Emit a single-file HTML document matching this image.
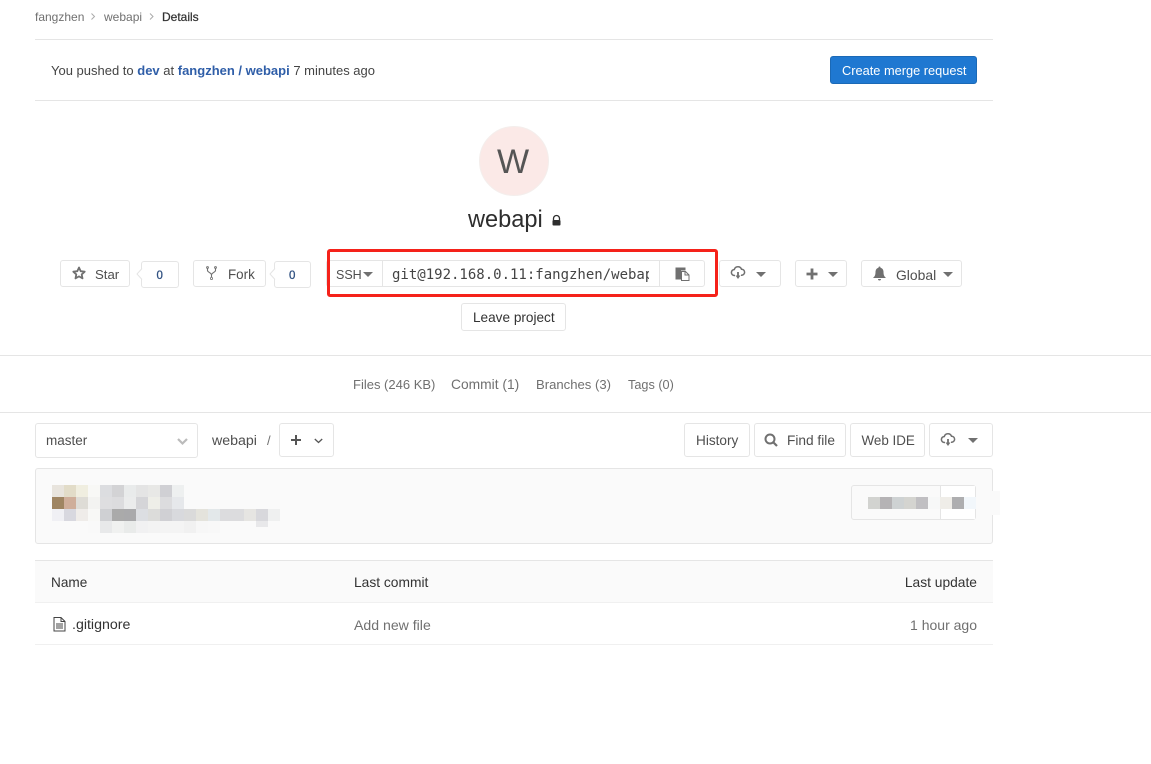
<!DOCTYPE html>
<html><head><meta charset="utf-8"><style>
html,body{margin:0;padding:0;background:#fff}
body{width:1151px;height:764px;position:relative;overflow:hidden;font-family:"Liberation Sans",sans-serif;font-size:13.4px;color:#2e2e2e}
.t{position:absolute;white-space:nowrap;line-height:20px;height:20px}
.b{position:absolute;box-sizing:border-box;border:1px solid #e5e5e5;border-radius:3px;background:#fff}
.l{position:absolute;height:1px;background:#e5e5e5}
svg{position:absolute;overflow:visible}
.g{color:#707070}.d{color:#4f4f4f}
</style></head><body>
<div class="t g" style="left:35px;top:7px;font-size:12px">fangzhen</div>
<div class="t g" style="left:104px;top:7px;font-size:12px">webapi</div>
<div class="t" style="left:162px;top:7px;font-size:12px;color:#333;-webkit-text-stroke:.25px #333">Details</div>
<svg style="left:0;top:0" width="200" height="30"><path d="M91.500 13.500l3 3-3 3M150 13.500l3 3-3 3" fill="none" stroke="#aaa" stroke-width="1"/></svg>
<div class="l" style="left:35px;top:39px;width:958px"></div>
<div class="l" style="left:35px;top:100px;width:958px"></div>
<div class="t" style="left:51px;top:61px;font-size:13px;color:#444">You pushed to <b style="color:#2f5ea8">dev</b> at <b style="color:#2f5ea8">fangzhen / webapi</b> 7 minutes ago</div>
<div class="b" style="left:830px;top:56px;width:147px;height:28px;background:#1f78d1;border-color:#1b69b6"></div>
<div class="t" style="left:842px;top:61px;color:#fff;font-size:12.800px">Create merge request</div>

<div style="position:absolute;left:479px;top:126px;width:70px;height:70px;border-radius:50%;background:#fbe9e7;box-sizing:border-box;border:1px solid #f4eeec"></div>
<div class="t" style="left:497px;top:146px;font-size:34px;line-height:32px;height:32px;color:#555">W</div>
<div class="t" style="left:468px;top:207px;font-size:23.600px;line-height:26px;height:26px;color:#2e2e2e">webapi</div>
<svg style="left:551.500px;top:215px" width="10" height="12"><path d="M1.500 5V3.500a3 3 0 0 1 6 0V5" fill="none" stroke="#2e2e2e" stroke-width="1.300"/><rect x=".5" y="5" width="8" height="5.500" rx="1" fill="#2e2e2e"/></svg>

<div class="b" style="left:60px;top:260px;width:70px;height:27px"></div>
<svg style="left:72px;top:266px" width="14" height="14"><path d="M7 1.500l1.700 3.700 4 .5-3 2.700.8 4L7 10.400l-3.500 2 .8-4-3-2.700 4-.5z" fill="none" stroke="#707070" stroke-width="1.800" stroke-linejoin="round"/></svg>
<div class="t d" style="left:95px;top:265px;font-size:13.200px">Star</div>
<div class="b" style="left:141px;top:261px;width:38px;height:27px"></div>
<svg style="left:136px;top:268px" width="6" height="12"><path d="M6 0.500L1 6l5 5.500" fill="#fff" stroke="#e5e5e5"/></svg>
<div class="t" style="left:156.500px;top:266px;font-size:11.500px;color:#2f5080;-webkit-text-stroke:.3px #2f5080">0</div>

<div class="b" style="left:193px;top:260px;width:73px;height:27px"></div>
<svg style="left:206px;top:266px" width="12" height="15"><path d="M1.500 1.500v3c0 1.800 4 2.200 4 4.500v2.500M9.500 1.500v3c0 1.800-4 2.200-4 4.500" fill="none" stroke="#707070" stroke-width="1.100"/><circle cx="1.500" cy="1.500" r="1" fill="none" stroke="#707070" stroke-width=".8"/><circle cx="9.500" cy="1.500" r="1" fill="none" stroke="#707070" stroke-width=".8"/><circle cx="5.500" cy="12.500" r="1.100" fill="none" stroke="#707070" stroke-width=".8"/></svg>
<div class="t d" style="left:228px;top:265px;font-size:13.400px">Fork</div>
<div class="b" style="left:274px;top:261px;width:37px;height:27px"></div>
<svg style="left:269px;top:268px" width="6" height="12"><path d="M6 0.500L1 6l5 5.500" fill="#fff" stroke="#e5e5e5"/></svg>
<div class="t" style="left:289px;top:266px;font-size:11.500px;color:#2f5080;-webkit-text-stroke:.3px #2f5080">0</div>

<div class="b" style="left:326px;top:260px;width:379px;height:27px"></div>
<div class="l" style="left:382px;top:260px;width:1px;height:27px"></div>
<div class="l" style="left:659px;top:260px;width:1px;height:27px"></div>
<div class="t d" style="left:336px;top:265px;font-size:12.500px">SSH</div>
<svg style="left:363px;top:272px" width="10" height="6"><path d="M0 0h10L5 5z" fill="#707070"/></svg>
<div class="t" style="left:392px;top:265px;width:257px;overflow:hidden;font-family:'DejaVu Sans Mono',monospace;font-size:14px;color:#444">git@192.168.0.11:fangzhen/webapi.git</div>
<svg style="left:675px;top:267px" width="16" height="16"><path d="M0.500 .5h10v3H6v9H.5z" fill="#707070"/><path d="M6.500 4.500h4l3.500 3.500v5.500H6.500z" fill="#fff" stroke="#707070"/><path d="M10 4.500V8h4" fill="none" stroke="#707070"/></svg>
<div style="position:absolute;left:327px;top:249px;width:385px;height:42px;border:3px solid #f5221a;border-radius:3px"></div>
<div class="b" style="left:719px;top:260px;width:62px;height:27px"></div>
<svg style="left:731px;top:266px" width="14" height="14"><path d="M4 9.500H3.500a3 3 0 0 1-.2-6 3.800 3.800 0 0 1 7.200-.3 3 3 0 0 1 .2 6H10" fill="none" stroke="#707070" stroke-width="1.500"/><path d="M7 6v4.500" stroke="#707070" stroke-width="1.800"/><path d="M4.500 9.500h5L7 13z" fill="#707070"/></svg>
<svg style="left:756px;top:272px" width="10" height="6"><path d="M0 0h10L5 5z" fill="#707070"/></svg>
<div class="b" style="left:795px;top:260px;width:52px;height:27px"></div>
<svg style="left:805.500px;top:267.500px" width="13" height="13"><path d="M6 .500v11M.500 6h11" stroke="#707070" stroke-width="2.800"/></svg>
<svg style="left:828px;top:272px" width="10" height="6"><path d="M0 0h10L5 5z" fill="#707070"/></svg>
<div class="b" style="left:861px;top:260px;width:101px;height:27px"></div>
<svg style="left:872px;top:266px" width="15" height="15"><path d="M7.500 .5c.8 0 1 .7 1 1.200 2 .5 3 2.200 3 4.300 0 3 .8 4.500 2.500 6H1c1.700-1.500 2.500-3 2.500-6 0-2.100 1-3.800 3-4.300 0-.5.200-1.200 1-1.200zM6 13h3a1.500 1.500 0 0 1-3 0z" fill="#707070"/></svg>
<div class="t d" style="left:896px;top:265px;font-size:13.900px">Global</div>
<svg style="left:943px;top:272px" width="10" height="6"><path d="M0 0h10L5 5z" fill="#707070"/></svg>
<div class="b" style="left:461px;top:303px;width:105px;height:28px"></div>
<div class="t" style="left:473px;top:308px;font-size:13.600px;color:#333">Leave project</div>

<div class="l" style="left:0;top:355px;width:1151px"></div>
<div class="l" style="left:0;top:412px;width:1151px"></div>
<div class="t g" style="left:353px;top:375px;font-size:13px">Files (246 KB)</div>
<div class="t g" style="left:451px;top:375px;font-size:13.800px">Commit (1)</div>
<div class="t g" style="left:536px;top:375px;font-size:13.100px">Branches (3)</div>
<div class="t g" style="left:628px;top:375px;font-size:12.700px">Tags (0)</div>

<div class="b" style="left:35px;top:423px;width:163px;height:35px"></div>
<div class="t d" style="left:46px;top:431px;font-size:13.500px">master</div>
<svg style="left:177px;top:437.500px" width="12" height="8"><path d="M1 1l4.500 4.500L10 1" fill="none" stroke="#bbb" stroke-width="2.200"/></svg>
<div class="t d" style="left:212px;top:431px;font-size:14.200px">webapi</div>
<div class="t g" style="left:267px;top:431px;font-size:13px">/</div>
<div class="b" style="left:279px;top:423px;width:55px;height:34px"></div>
<svg style="left:291px;top:435px" width="11" height="11"><path d="M5 0v10M0 5h10" stroke="#555" stroke-width="2"/></svg>
<svg style="left:313.500px;top:438px" width="10" height="7"><path d="M.8 1l3.700 3.500L8.200 1" fill="none" stroke="#555" stroke-width="1.300"/></svg>

<div class="b" style="left:684px;top:423px;width:66px;height:34px"></div>
<div class="t d" style="left:696px;top:431px;font-size:13.600px">History</div>
<div class="b" style="left:754px;top:423px;width:92px;height:34px"></div>
<svg style="left:764px;top:433px" width="15" height="15"><circle cx="6" cy="6" r="4.500" fill="none" stroke="#707070" stroke-width="2"/><path d="M9.500 9.500l3.500 3.500" stroke="#707070" stroke-width="2.200"/></svg>
<div class="t d" style="left:787px;top:431px;font-size:13.700px">Find file</div>
<div class="b" style="left:850px;top:423px;width:75px;height:34px"></div>
<div class="t d" style="left:861.500px;top:431px;font-size:13.400px">Web IDE</div>
<div class="b" style="left:929px;top:423px;width:64px;height:34px"></div>
<svg style="left:941px;top:433px" width="14" height="14"><path d="M4 9.500H3.500a3 3 0 0 1-.2-6 3.800 3.800 0 0 1 7.200-.3 3 3 0 0 1 .2 6H10" fill="none" stroke="#707070" stroke-width="1.500"/><path d="M7 6v4.500" stroke="#707070" stroke-width="1.800"/><path d="M4.500 9.500h5L7 13z" fill="#707070"/></svg>
<svg style="left:968px;top:438px" width="10" height="6"><path d="M0 0h10L5 5z" fill="#707070"/></svg>

<div class="b" style="left:35px;top:468px;width:958px;height:76px;background:#fafafa"></div>
<div class="b" style="left:851px;top:485px;width:125px;height:35px;background:#fafafa"></div>
<div style="position:absolute;left:941px;top:486px;width:34px;height:33px;background:#fff"></div>
<div class="l" style="left:940px;top:485px;width:1px;height:35px"></div>
<svg style="left:0;top:0" width="1151" height="764" shape-rendering="crispEdges">
<g>
<rect x="52" y="485" width="12" height="12" fill="#e8e4dd"/><rect x="64" y="485" width="12" height="12" fill="#e2dcc8"/><rect x="76" y="485" width="12" height="12" fill="#f0eee0"/><rect x="88" y="485" width="12" height="12" fill="#f8f8f6"/><rect x="100" y="485" width="12" height="12" fill="#dcdde0"/><rect x="112" y="485" width="12" height="12" fill="#d3d3d5"/><rect x="124" y="485" width="12" height="12" fill="#e9ebeb"/><rect x="136" y="485" width="12" height="12" fill="#e4e4e4"/><rect x="148" y="485" width="12" height="12" fill="#e8e8e6"/><rect x="160" y="485" width="12" height="12" fill="#d0d0d4"/><rect x="172" y="485" width="12" height="12" fill="#eef0f0"/>
<rect x="52" y="497" width="12" height="12" fill="#9f8562"/><rect x="64" y="497" width="12" height="12" fill="#cfae9a"/><rect x="76" y="497" width="12" height="12" fill="#dedcd6"/><rect x="88" y="497" width="12" height="12" fill="#f3f3f1"/><rect x="100" y="497" width="12" height="12" fill="#dedee0"/><rect x="112" y="497" width="12" height="12" fill="#dcdcde"/><rect x="124" y="497" width="12" height="12" fill="#ebecec"/><rect x="136" y="497" width="12" height="12" fill="#d5d5d8"/><rect x="148" y="497" width="12" height="12" fill="#eeeee8"/><rect x="160" y="497" width="12" height="12" fill="#dcdcde"/><rect x="172" y="497" width="12" height="12" fill="#e6e8eb"/>
<rect x="52" y="509" width="12" height="12" fill="#f0f0f4"/><rect x="64" y="509" width="12" height="12" fill="#d8d8df"/><rect x="76" y="509" width="12" height="12" fill="#efece9"/><rect x="88" y="509" width="12" height="12" fill="#f8f8f6"/><rect x="100" y="509" width="12" height="12" fill="#cfd0d3"/><rect x="112" y="509" width="12" height="12" fill="#aaaaaa"/><rect x="124" y="509" width="12" height="12" fill="#a9a9ab"/><rect x="136" y="509" width="12" height="12" fill="#dcdee2"/><rect x="148" y="509" width="12" height="12" fill="#dcdcda"/><rect x="160" y="509" width="12" height="12" fill="#d0d0d4"/><rect x="172" y="509" width="12" height="12" fill="#d8d9dd"/><rect x="184" y="509" width="12" height="12" fill="#dadada"/><rect x="196" y="509" width="12" height="12" fill="#e4e3dc"/><rect x="208" y="509" width="12" height="12" fill="#e3e8ea"/><rect x="220" y="509" width="12" height="12" fill="#dcdcde"/><rect x="232" y="509" width="12" height="12" fill="#dcdcde"/><rect x="244" y="509" width="12" height="12" fill="#e6e5e2"/><rect x="256" y="509" width="12" height="12" fill="#d8d8dc"/><rect x="268" y="509" width="12" height="12" fill="#eff0f0"/>
<rect x="88" y="521" width="12" height="12" fill="#f9f9f9"/><rect x="100" y="521" width="12" height="12" fill="#e8e9ea"/><rect x="112" y="521" width="12" height="12" fill="#f0f1f0"/><rect x="124" y="521" width="12" height="12" fill="#e9ebea"/><rect x="136" y="521" width="12" height="12" fill="#f1f1f2"/><rect x="148" y="521" width="12" height="12" fill="#f3f3f3"/><rect x="160" y="521" width="12" height="12" fill="#f4f4f4"/><rect x="172" y="521" width="12" height="12" fill="#f4f4f4"/><rect x="184" y="521" width="12" height="12" fill="#f1f1f1"/><rect x="196" y="521" width="12" height="12" fill="#f7f7f7"/><rect x="208" y="521" width="12" height="12" fill="#f8f8f8"/><rect x="256" y="521" width="12" height="6" fill="#e8e8ea"/>
<rect x="868" y="497" width="12" height="12" fill="#d2d3d0"/><rect x="880" y="497" width="12" height="12" fill="#b5b3b5"/><rect x="892" y="497" width="12" height="12" fill="#ced2d3"/><rect x="904" y="497" width="12" height="12" fill="#d4d4d0"/><rect x="916" y="497" width="12" height="12" fill="#c0bfc2"/><rect x="928" y="497" width="12" height="12" fill="#f7f8f8"/><rect x="940" y="497" width="12" height="12" fill="#efede8"/><rect x="952" y="497" width="12" height="12" fill="#aeaeb0"/><rect x="964" y="497" width="12" height="12" fill="#f2f7fb"/><rect x="976" y="491" width="24" height="24" fill="#fafafa"/>
</g></svg>

<div style="position:absolute;left:35px;top:560px;width:958px;height:42px;background:#fafafa"></div>
<div class="l" style="left:35px;top:560px;width:958px"></div>
<div class="l" style="left:35px;top:602px;width:958px;background:#f0f0f0"></div>
<div class="l" style="left:35px;top:644px;width:958px;background:#f0f0f0"></div>
<div class="t" style="left:51px;top:572.500px;font-size:13.600px;color:#333">Name</div>
<div class="t" style="left:354px;top:572.500px;font-size:13.800px;color:#333">Last commit</div>
<div class="t" style="right:174px;top:572.500px;font-size:13.800px;color:#333">Last update</div>
<svg style="left:53px;top:617px" width="13" height="15"><path d="M1 .5h7l4 4v9.500H1zM8 .5v4h4" fill="none" stroke="#444" stroke-width="1"/><path d="M3 7h7M3 9h7M3 11h7" stroke="#444" stroke-width="1"/></svg>
<div class="t" style="left:72px;top:615px;font-size:14.200px;color:#333">.gitignore</div>
<div class="t g" style="left:354px;top:615px;font-size:14.100px">Add new file</div>
<div class="t g" style="right:174px;top:615px;font-size:14px">1 hour ago</div>
</body></html>
